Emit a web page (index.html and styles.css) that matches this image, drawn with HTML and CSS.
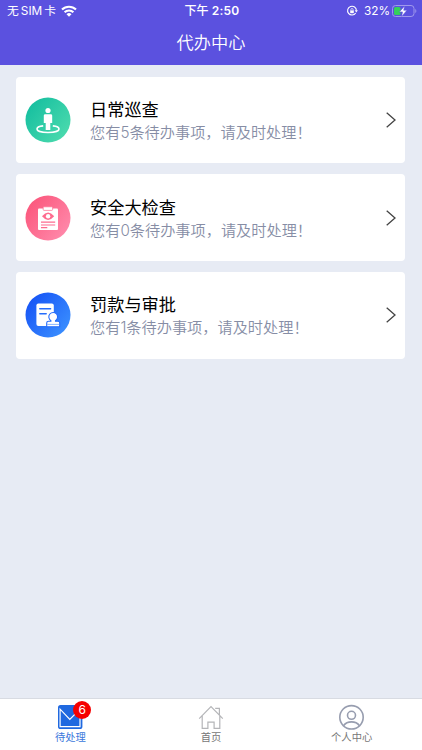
FILE: index.html
```html
<!DOCTYPE html>
<html lang="zh-CN">
<head>
    <meta charset="UTF-8">
    <meta name="viewport" content="width=device-width, initial-scale=1.0">
    <title>代办中心</title>
    <link rel="stylesheet" href="styles.css">
</head>
<body>

    <header>
        <div class="status-bar">
            <div class="carrier">
                <span>无<b>SIM</b>卡</span>
                <svg class="wifi" viewBox="0 0 16 12" width="16" height="12">
                    <path d="M1 4.6a9.9 9.9 0 0 1 14 0M3.6 7.3a6.2 6.2 0 0 1 8.8 0" fill="none" stroke="#fff" stroke-width="2.1"/>
                    <path d="M8 11.8 5.5 9.2a3.5 3.5 0 0 1 5 0z" fill="#fff"/>
                </svg>
            </div>
            <div class="clock">下午 <b>2:50</b></div>
            <div class="power">
                <svg viewBox="0 0 12 12" width="12" height="12">
                    <path d="M9.7 8A4.4 4.4 0 1 1 10.4 5.6" fill="none" stroke="#fff" stroke-width="1.1"/>
                    <path d="M8.7 5.3h3.2l-1.6 2.2z" fill="#fff"/>
                    <path d="M4.2 5.4h3.6v2.8H4.2z" fill="#fff"/>
                    <path d="M4.9 5.5V4.6a1.1 1.1 0 0 1 2.2 0v.9" fill="none" stroke="#fff" stroke-width=".7"/>
                </svg>
                <span>32%</span>
                <svg viewBox="0 0 25 12" width="25" height="12">
                    <rect x=".5" y=".5" width="21.5" height="11" rx="3" fill="none" stroke="#a099ec"/>
                    <rect x="2" y="2" width="6.5" height="8" rx="1.5" fill="#35d05c"/>
                    <path d="M23.3 4v4c1.4-.6 1.4-3.4 0-4z" fill="#a099ec"/>
                    <path d="M12.6 1 7.4 6.9h3.1L9.7 11.4l5.2-6.1h-3.2z" fill="#fff" stroke="#5b51df" stroke-width=".5"/>
                </svg>
            </div>
        </div>
        <h1>代办中心</h1>
    </header>

    <main>
        <a class="card">
            <svg class="card-icon" viewBox="0 0 46 46">
                <defs>
                    <linearGradient id="green" x1="0" y1="0.1" x2="1" y2="0.9">
                        <stop offset="0" stop-color="#12bd9f"/>
                        <stop offset="1" stop-color="#4fdcae"/>
                    </linearGradient>
                </defs>
                <circle cx="23" cy="23" r="22.5" fill="url(#green)"/>
                <path d="M18.2 28.9c-4 .4-6.2 1.6-6.2 3 0 2.1 4.8 3.6 11 3.6s11-1.5 11-3.6c0-1.4-2.2-2.6-6.2-3" fill="none" stroke="#fff" stroke-width="1.6"/>
                <circle cx="23" cy="13.5" r="2.6" fill="#fff"/>
                <path d="M20.2 17.2h5.6q1.4 0 1.4 1.4V26h-1.9v7h-4.6v-7h-1.9v-7.4q0-1.4 1.4-1.4z" fill="#fff"/>
            </svg>
            <div class="card-text">
                <h2>日常巡查</h2>
                <p>您有5条待办事项，请及时处理！</p>
            </div>
            <svg class="arrow" viewBox="0 0 10 16"><path d="M.7.8 9 8 .7 15.2"/></svg>
        </a>

        <a class="card">
            <svg class="card-icon" viewBox="0 0 46 46">
                <defs>
                    <linearGradient id="pink" x1="0" y1="0.1" x2="1" y2="0.9">
                        <stop offset="0" stop-color="#fb5379"/>
                        <stop offset="1" stop-color="#ff8dae"/>
                    </linearGradient>
                </defs>
                <circle cx="23" cy="23" r="22.5" fill="url(#pink)"/>
                <rect x="13" y="13.6" width="20" height="21.4" rx="1" fill="#fff"/>
                <rect x="18.2" y="11.8" width="9.4" height="3.6" rx=".8" fill="#fff" stroke="#fe6b8f" stroke-width=".7"/>
                <path d="M17 21.2q6.1-7.4 12.2 0-6.1 7.4-12.2 0z" fill="#fe6b8f"/>
                <circle cx="23.1" cy="21.2" r="2.2" fill="#fff"/>
                <path d="M16 27.2h14.2M16 30h14.2M16 32.6h6.3" stroke="#fe6b8f" stroke-width="1.2"/>
            </svg>
            <div class="card-text">
                <h2>安全大检查</h2>
                <p>您有0条待办事项，请及时处理！</p>
            </div>
            <svg class="arrow" viewBox="0 0 10 16"><path d="M.7.8 9 8 .7 15.2"/></svg>
        </a>

        <a class="card">
            <svg class="card-icon" viewBox="0 0 46 46">
                <defs>
                    <linearGradient id="blue" x1="0" y1="0.1" x2="1" y2="0.9">
                        <stop offset="0" stop-color="#1450f5"/>
                        <stop offset="1" stop-color="#3d93ff"/>
                    </linearGradient>
                </defs>
                <circle cx="23" cy="23" r="22.5" fill="url(#blue)"/>
                <rect x="11.4" y="11.6" width="17.4" height="22.4" rx="2" fill="#fff"/>
                <path d="M14.8 16.8h10.8M14.8 21.8h6.4" stroke="#256cfb" stroke-width="1.5" stroke-linecap="round"/>
                <path d="M25.9 28.6a4.4 4.4 0 1 1 4.6 0v.7h2.4q1.8 0 1.8 1.8v3.6H21.7v-3.6q0-1.8 1.8-1.8h2.4z" fill="#fff" stroke="#256cfb" stroke-width="1.1"/>
                <path d="M22.2 32.4h12" stroke="#6ba2fd" stroke-width=".8"/>
            </svg>
            <div class="card-text">
                <h2>罚款与审批</h2>
                <p>您有1条待办事项，请及时处理！</p>
            </div>
            <svg class="arrow" viewBox="0 0 10 16"><path d="M.7.8 9 8 .7 15.2"/></svg>
        </a>
    </main>

    <nav>
        <a class="tab active">
            <span class="tab-icon">
                <svg viewBox="0 0 26 26" width="26" height="26">
                    <rect x="1" y="1" width="24.4" height="24" rx="2.6" fill="#2069e0"/>
                    <path d="M3.1 22.6V5.2l9.7 10.2L23 5.2v17.4z" fill="none" stroke="#fff" stroke-width="1.2"/>
                </svg>
                <span class="badge">6</span>
            </span>
            <span>待处理</span>
        </a>
        <a class="tab">
            <span class="tab-icon">
                <svg viewBox="0 0 26 26" width="26" height="26" fill="none" stroke="#b4b5b8" stroke-width="1.2">
                    <path d="M1.2 14.7 13 2.5l11.8 12.2M17.2 4.3h4.2v6.4M4.2 12v12.4h5.7v-6.3h6.2v6.3h5.7V12"/>
                </svg>
            </span>
            <span>首页</span>
        </a>
        <a class="tab">
            <span class="tab-icon">
                <svg viewBox="0 0 26 26" width="26" height="26" fill="none" stroke="#979daf" stroke-width="1.6">
                    <circle cx="12.5" cy="13.3" r="11.7"/>
                    <circle cx="12.5" cy="11.3" r="4"/>
                    <path d="M4.5 21.7q2.8-3.8 8-3.8t8 3.8"/>
                </svg>
            </span>
            <span>个人中心</span>
        </a>
    </nav>

</body>
</html>
```
FILE: styles.css
```css
* {
    box-sizing: border-box;
}

body {
    display: flex;
    flex-direction: column;
    height: 100vh;
    margin: 0;
    background-color: #e7ebf4;
    font-family: Inter, "Noto Sans CJK SC", sans-serif;
    color: #000;
}

/* Header with the phone status bar */
header {
    height: 65px;
    background-color: #5b51df;
    color: white;
}

.status-bar {
    display: grid;
    grid-template-columns: 1fr auto 1fr;
    align-items: center;
    height: 22px;
    padding: 0 5px 0 7px;
    font-size: 12px;
    line-height: 22px;
}

.carrier,
.power {
    display: flex;
    align-items: center;
}

.carrier {
    gap: 5px;
    font-size: 11.8px;
}

.carrier b {
    margin: 0 2px;
    font-weight: 400;
}

.clock {
    font-weight: 500;
}

.clock b {
    font-weight: 600;
    letter-spacing: 0.2px;
}

.power {
    justify-content: flex-end;
    gap: 2px;
}

.power span {
    margin-left: 4px;
    font-size: 11.8px;
}

h1 {
    margin: 0;
    font-size: 17.2px;
    font-weight: 350;
    line-height: 42px;
    text-align: center;
}

/* Task cards */
main {
    display: flex;
    flex: 1;
    flex-direction: column;
    gap: 11px;
    padding: 11.5px 17px 0 16px;
}

.card {
    display: flex;
    align-items: center;
    height: 86.7px;
    padding: 0 9px;
    background-color: white;
    border-radius: 4px;
}

.card-icon {
    width: 46px;
    height: 46px;
}

.card-text {
    flex: 1;
    margin-left: 19px;
    padding-top: 2px;
    white-space: nowrap;
}

h2 {
    margin: 0;
    font-size: 17.2px;
    font-weight: 400;
    line-height: 24px;
}

.card p {
    margin: 0;
    color: #868da5;
    font-size: 15.2px;
    font-weight: 350;
    line-height: 22px;
}

.arrow {
    width: 10px;
    height: 16px;
    fill: none;
    stroke: #444;
    stroke-width: 1.3;
}

/* Bottom tabs */
nav {
    display: flex;
    height: 52px;
    background-color: white;
    border-top: 1px solid #d8dbe2;
}

.tab {
    display: flex;
    flex: 1;
    flex-direction: column;
    align-items: center;
    padding-top: 5px;
    color: #777;
    font-size: 10.3px;
    line-height: 15px;
}

.tab.active {
    color: #3a78dc;
}

.tab-icon {
    position: relative;
    height: 26px;
}

.badge {
    position: absolute;
    top: -3px;
    left: 16px;
    width: 18px;
    height: 18px;
    border-radius: 50%;
    background-color: #f50000;
    color: white;
    font-size: 12px;
    line-height: 18px;
    text-align: center;
}
```
